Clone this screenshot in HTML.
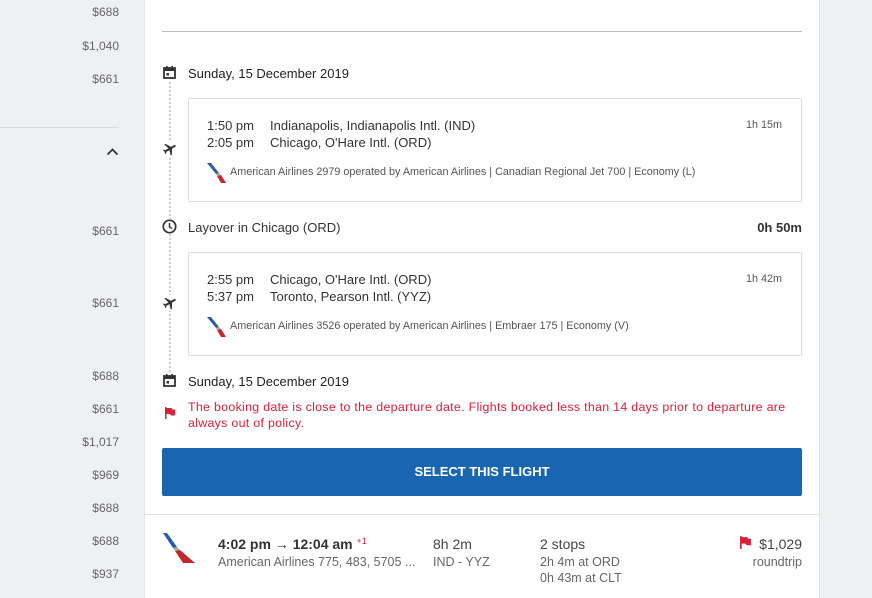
<!DOCTYPE html>
<html><head><meta charset="utf-8"><style>
*{margin:0;padding:0;box-sizing:border-box}
body{width:872px;height:598px;overflow:hidden;background:#eff0f2;font-family:"Liberation Sans",sans-serif;color:#222;position:relative}
.a{position:absolute;white-space:nowrap}
.lp{color:#666;font-size:12px;right:753px;text-align:right}
.main{position:absolute;left:144px;top:0;width:676px;height:598px;background:#fff;border-left:1px solid #e2e3e6;border-right:1px solid #e2e3e6}
.box{position:absolute;left:188px;width:614px;border:1px solid #dcdde0;border-radius:2px;background:#fff}
.t{font-size:13px;color:#333}
.s{font-size:10.8px;color:#555}
.dot{position:absolute;left:169px;border-left:2px dotted #ccc;width:0}
</style></head><body>
<div class="a lp" style="top:5px">$688</div>
<div class="a lp" style="top:39px">$1,040</div>
<div class="a lp" style="top:72px">$661</div>
<div class="a" style="left:0;top:127px;width:119px;border-top:1px solid #d8d9dc"></div>
<svg class="a" style="left:106px;top:147px" width="13" height="9" viewBox="0 0 13 9"><path d="M1.5 7.5 L6.5 2.5 L11.5 7.5" fill="none" stroke="#333" stroke-width="1.8"/></svg>
<div class="a lp" style="top:224px">$661</div>
<div class="a lp" style="top:296px">$661</div>
<div class="a lp" style="top:369px">$688</div>
<div class="a lp" style="top:402px">$661</div>
<div class="a lp" style="top:435px">$1,017</div>
<div class="a lp" style="top:468px">$969</div>
<div class="a lp" style="top:501px">$688</div>
<div class="a lp" style="top:534px">$688</div>
<div class="a lp" style="top:567px">$937</div>

<div class="main"></div>
<div class="a" style="left:162px;top:31px;width:640px;border-top:1px solid #b8bbc0"></div>

<div class="dot" style="top:82px;height:290px"></div>

<svg class="a" style="left:163px;top:66px" width="13" height="13" viewBox="0 0 13 13"><rect x="1" y="2" width="11" height="10" fill="none" stroke="#333" stroke-width="1.8"/><rect x="1" y="2" width="11" height="3" fill="#333"/><rect x="3" y="0" width="1.6" height="3" fill="#333"/><rect x="8.4" y="0" width="1.6" height="3" fill="#333"/><rect x="3.5" y="7" width="2.5" height="2.5" fill="#333"/></svg>
<div class="a t" style="left:188px;top:66px;color:#222">Sunday, 15 December 2019</div>

<div class="box" style="top:98px;height:104px"></div>
<svg class="a" style="left:162px;top:141px;background:#fff" width="16" height="16" viewBox="0 0 24 24"><path fill="#333" d="M21 16v-2l-8-5V3.5c0-.83-.67-1.5-1.5-1.5S10 2.67 10 3.5V9l-8 5v2l8-2.5V19l-2 1.5V22l3.5-1 3.5 1v-1.5L13 19v-5.5l8 2.5z" transform="rotate(60 12 12)"/></svg>
<div class="a t" style="left:207px;top:118px">1:50 pm</div>
<div class="a t" style="left:270px;top:118px">Indianapolis, Indianapolis Intl. (IND)</div>
<div class="a t" style="left:207px;top:135px">2:05 pm</div>
<div class="a t" style="left:270px;top:135px">Chicago, O'Hare Intl. (ORD)</div>
<div class="a s" style="left:746px;top:119px">1h 15m</div>
<svg class="a" style="left:207px;top:163px" width="20" height="20" viewBox="0 0 20 20"><path d="M0 0 L4 0 L12 10 L9 11 Z" fill="#2a5aa8"/><path d="M9 11 L12 10 L14 12 L10 13 Z" fill="#aaa"/><path d="M10 13 L14 12 L19 20 L14 20 Z" fill="#c3272f"/></svg>
<div class="a s" style="left:230px;top:166px">American Airlines 2979 operated by American Airlines | Canadian Regional Jet 700 | Economy (L)</div>

<svg class="a" style="left:162px;top:219px;background:#fff" width="15" height="15" viewBox="0 0 15 15"><circle cx="7.5" cy="7.5" r="6.2" fill="none" stroke="#333" stroke-width="1.7"/><path d="M7.5 4v4l2.5 1.5" fill="none" stroke="#333" stroke-width="1.5"/></svg>
<div class="a t" style="left:188px;top:220px">Layover in Chicago (ORD)</div>
<div class="a t" style="right:70px;top:220px;font-weight:bold">0h 50m</div>

<div class="box" style="top:252px;height:104px"></div>
<svg class="a" style="left:162px;top:295px;background:#fff" width="16" height="16" viewBox="0 0 24 24"><path fill="#333" d="M21 16v-2l-8-5V3.5c0-.83-.67-1.5-1.5-1.5S10 2.67 10 3.5V9l-8 5v2l8-2.5V19l-2 1.5V22l3.5-1 3.5 1v-1.5L13 19v-5.5l8 2.5z" transform="rotate(60 12 12)"/></svg>
<div class="a t" style="left:207px;top:272px">2:55 pm</div>
<div class="a t" style="left:270px;top:272px">Chicago, O'Hare Intl. (ORD)</div>
<div class="a t" style="left:207px;top:289px">5:37 pm</div>
<div class="a t" style="left:270px;top:289px">Toronto, Pearson Intl. (YYZ)</div>
<div class="a s" style="left:746px;top:273px">1h 42m</div>
<svg class="a" style="left:207px;top:317px" width="20" height="20" viewBox="0 0 20 20"><path d="M0 0 L4 0 L12 10 L9 11 Z" fill="#2a5aa8"/><path d="M9 11 L12 10 L14 12 L10 13 Z" fill="#aaa"/><path d="M10 13 L14 12 L19 20 L14 20 Z" fill="#c3272f"/></svg>
<div class="a s" style="left:230px;top:320px">American Airlines 3526 operated by American Airlines | Embraer 175 | Economy (V)</div>

<svg class="a" style="left:163px;top:374px;background:#fff" width="13" height="13" viewBox="0 0 13 13"><rect x="1" y="2" width="11" height="10" fill="none" stroke="#333" stroke-width="1.8"/><rect x="1" y="2" width="11" height="3" fill="#333"/><rect x="3" y="0" width="1.6" height="3" fill="#333"/><rect x="8.4" y="0" width="1.6" height="3" fill="#333"/><rect x="3.5" y="7" width="2.5" height="2.5" fill="#333"/></svg>
<div class="a t" style="left:188px;top:374px;color:#222">Sunday, 15 December 2019</div>
<svg class="a" style="left:164px;top:407px" width="12" height="12" viewBox="0 0 12 12"><path d="M1 0h1.5v12H1z M2.5 1h5l1 1.5H11v6H7l-1-1.5H2.5z" fill="#d8203a"/></svg>
<div class="a" style="left:188px;top:400px;font-size:12.4px;letter-spacing:0.3px;color:#d8203a">The booking date is close to the departure date. Flights booked less than 14 days prior to departure are</div>
<div class="a" style="left:188px;top:416px;font-size:12.4px;letter-spacing:0.3px;color:#d8203a">always out of policy.</div>

<div class="a" style="left:162px;top:448px;width:640px;height:48px;background:#1a65b0;border-radius:2px;color:#fff;font-size:13px;font-weight:bold;text-align:center;line-height:48px">SELECT THIS FLIGHT</div>

<div class="a" style="left:145px;top:514px;width:675px;border-top:1px solid #e2e3e6"></div>
<svg class="a" style="left:163px;top:533px" width="32" height="30" viewBox="0 0 32 30"><path d="M0 0 L4 0 L14 14 L10 15 Z" fill="#2a5aa8"/><path d="M10 15 L14 14 L17 17 L12 18 Z" fill="#aaa"/><path d="M12 18 L17 17 L32 30 L20 30 Z" fill="#c3272f"/></svg>
<div class="a" style="left:218px;top:536px;font-size:14px;font-weight:bold;color:#333">4:02 pm → 12:04 am <span style="color:#d8203a;font-size:9px;font-weight:normal;vertical-align:top">+1</span></div>
<div class="a" style="left:218px;top:555px;font-size:12.5px;color:#666">American Airlines 775, 483, 5705 ...</div>
<div class="a" style="left:433px;top:536px;font-size:14px;color:#444">8h 2m</div>
<div class="a" style="left:433px;top:555px;font-size:12.5px;color:#666">IND - YYZ</div>
<div class="a" style="left:540px;top:536px;font-size:14px;color:#444">2 stops</div>
<div class="a" style="left:540px;top:555px;font-size:12.5px;color:#666">2h 4m at ORD</div>
<div class="a" style="left:540px;top:571px;font-size:12.5px;color:#666">0h 43m at CLT</div>
<svg class="a" style="left:739px;top:536px" width="13" height="13" viewBox="0 0 12 12"><path d="M1 0h1.5v12H1z M2.5 1h5l1 1.5H11v6H7l-1-1.5H2.5z" fill="#d8203a"/></svg>
<div class="a" style="right:70px;top:536px;font-size:14px;color:#444">$1,029</div>
<div class="a" style="right:70px;top:555px;font-size:12.5px;color:#666">roundtrip</div>
</body></html>
